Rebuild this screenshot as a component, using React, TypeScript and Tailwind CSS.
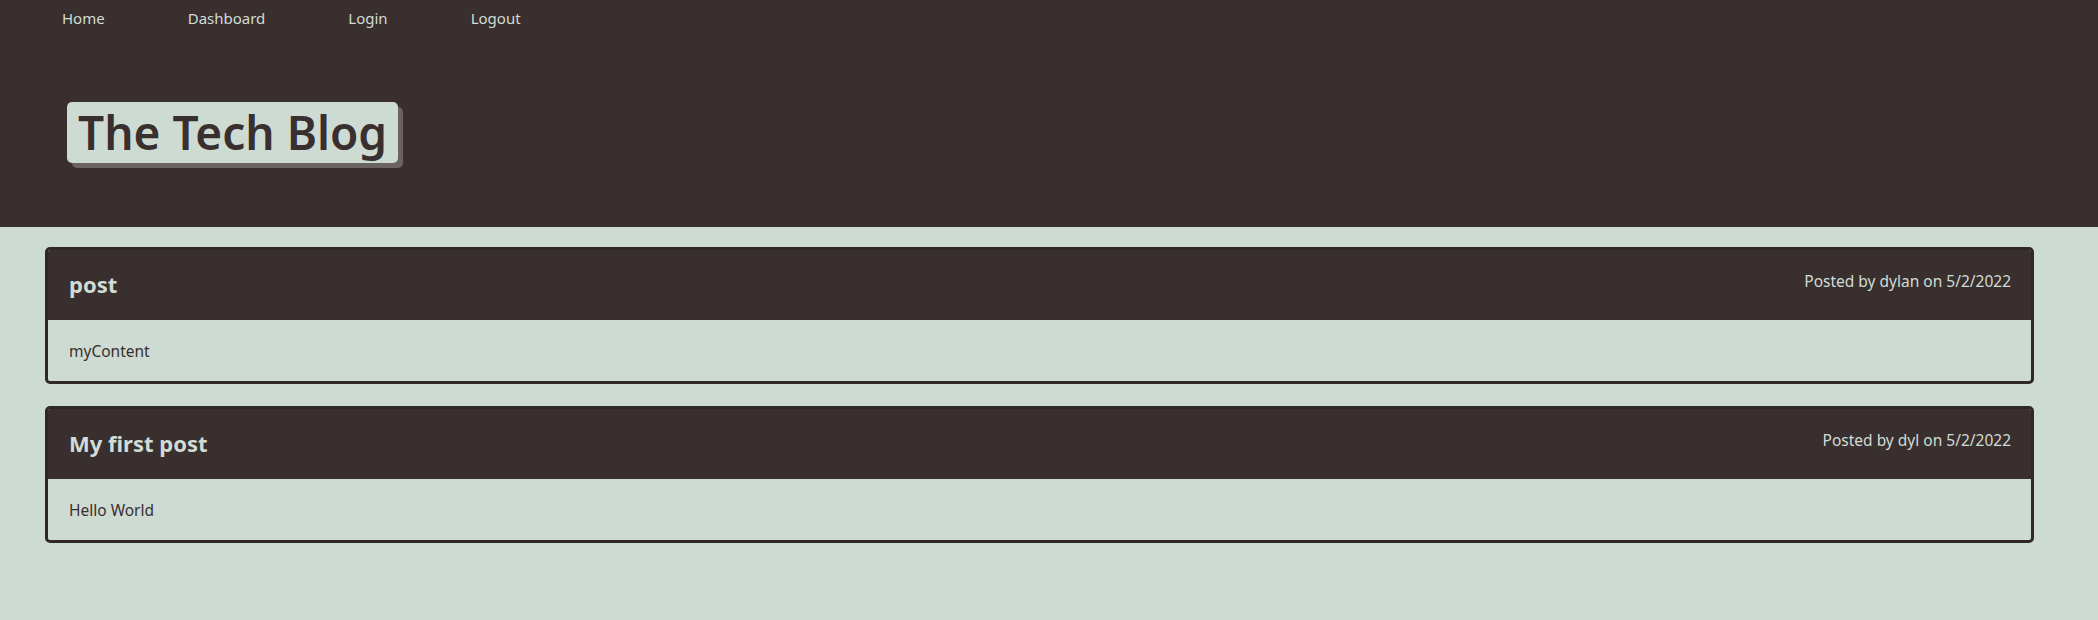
const posts = [
  { id: 1, title: 'post', author: 'dylan', date: '5/2/2022', content: 'myContent' },
  { id: 2, title: 'My first post', author: 'dyl', date: '5/2/2022', content: 'Hello World' },
];

export default function App() {
  return (
    <div
      className="min-h-[620px] bg-[#cedbd2] text-[#3a2f2f]"
      style={{ fontFamily: '"Noto Sans", "Open Sans", Arial, sans-serif' }}
    >
      <header className="h-[227px] bg-[#3a2f2f]">
        <nav className="flex gap-[83px] pl-[62px] pt-[6px] text-[15px] leading-[24px] text-[#d0dcd4]">
          <a href="#">Home</a>
          <a href="#">Dashboard</a>
          <a href="#">Login</a>
          <a href="#">Logout</a>
        </nav>
        <div className="ml-[67px] mt-[72px]">
          <h1 className="inline-block rounded-[5px] bg-[#cedbd2] px-[11px] text-[46px] font-semibold leading-[61px] text-[#3a2f2f] shadow-[5px_5px_0_#6b6363]">
            The Tech Blog
          </h1>
        </div>
      </header>

      <main className="flex flex-col gap-[22px] pl-[45px] pr-[64px] pt-[20px] pb-[76px]">
        {posts.map((post) => (
          <div key={post.id} className="overflow-hidden rounded-[5px] border-[3px] border-[#2f2828]">
            <div className="flex h-[70px] items-center justify-between bg-[#3a2f2f] pl-[21px] pr-[20px] text-[#d0dcd4]">
              <h2 className="-mt-[1px] text-[22px] font-bold">{post.title}</h2>
              <span className="-mt-[6px] text-[15.5px]">
                Posted by {post.author} on {post.date}
              </span>
            </div>
            <div className="flex h-[61px] items-center px-[21px] pt-[2px] text-[15.5px]">{post.content}</div>
          </div>
        ))}
      </main>
    </div>
  );
}
